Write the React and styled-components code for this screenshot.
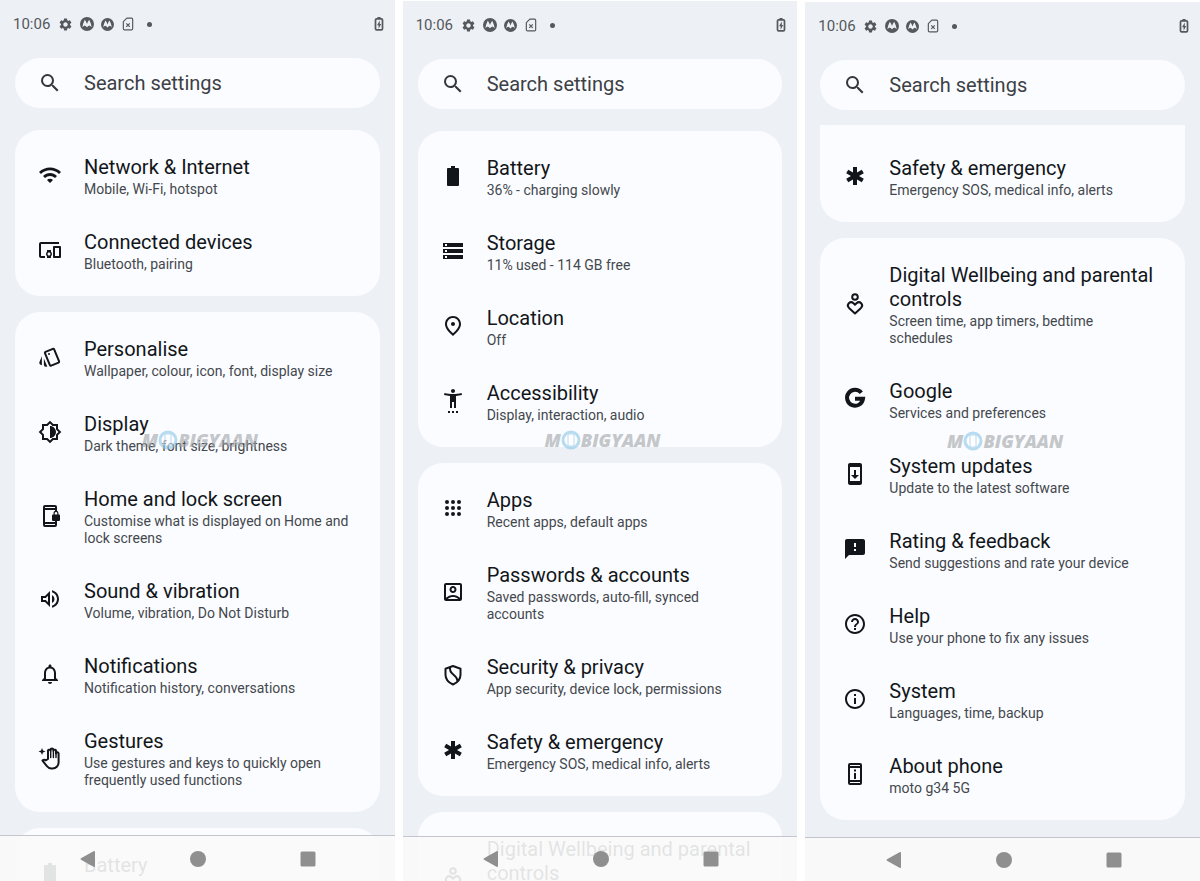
import styled, { createGlobalStyle } from "styled-components";
import {
  MdDevicesOther,
  MdEmergency,
  MdFeedback,
  MdHelpOutline,
  MdInfoOutline,
  MdNotificationsNone,
  MdOutlineAccountBox,
  MdOutlineBrightnessMedium,
  MdOutlinePlace,
  MdOutlineStyle,
  MdOutlineVolumeUp,
  MdSearch,
  MdSettings,
  MdSettingsAccessibility,
  MdStorage,
  MdSystemUpdate,
  MdWifi,
} from "react-icons/md";

const Svg = ({ children, ...props }) => (
  <svg viewBox="0 0 24 24" width="24" height="24" fill="currentColor" {...props}>
    {children}
  </svg>
);

const BatteryIcon = () => (
  <Svg>
    <path d="M10 2h4v2h3a1 1 0 0 1 1 1v16a1 1 0 0 1-1 1H7a1 1 0 0 1-1-1V5a1 1 0 0 1 1-1h3z" />
  </Svg>
);

const HomeLockIcon = () => (
  <Svg>
    <path d="M7 1h10a2 2 0 0 1 2 2v4h-2V6H7v12h10v-1h2v4a2 2 0 0 1-2 2H7a2 2 0 0 1-2-2V3a2 2 0 0 1 2-2zm0 2v1h10V3zm0 17v1h10v-1z" />
    <path d="M21 10.5h-.5V9.3a2.5 2.5 0 0 0-5 0v1.2H15a1 1 0 0 0-1 1V16a1 1 0 0 0 1 1h6a1 1 0 0 0 1-1v-4.5a1 1 0 0 0-1-1zm-1.7 0h-2.6V9.3a1.3 1.3 0 0 1 2.6 0z" />
  </Svg>
);

const GesturesIcon = () => (
  <Svg>
    <path d="M4 2l1 2.5 2.5 1L5 6.5 4 9 3 6.5.5 5.5 3 4.5z" />
    <g fill="none" stroke="currentColor" strokeWidth="2" strokeLinejoin="round" strokeLinecap="round">
      <path d="M10 13V5.5a1.3 1.3 0 0 1 2.6-.8V4a1.4 1.4 0 0 1 2.8 0v.7a1.3 1.3 0 0 1 2.6.8v2a1.3 1.3 0 0 1 2.6.3v8.7a6 6 0 0 1-6 6h-1.2c-2 0-3.3-.8-4.5-2.3l-4.400-5.500c.8-1.100 2-1.200 3.200-.4z" />
      <path d="M12.7 5.2v6.3M15.4 5.2v6.3M18 6.5v5" strokeWidth="1.4" />
    </g>
  </Svg>
);

const AppsIcon = () => (
  <Svg>
    {[6, 12, 18].map((y) =>
      [6, 12, 18].map((x) => <circle key={`${x}-${y}`} cx={x} cy={y} r="2" />)
    )}
  </Svg>
);

const ShieldIcon = () => (
  <Svg fill="none" stroke="currentColor" strokeWidth="2" strokeLinejoin="round">
    <path d="M12 3l7.5 2.7v6c0 4.5-3 7.8-7.5 9.8-4.5-2-7.5-5.3-7.5-9.8v-6z" />
    <path d="M9 4.2c-.5 3.5.5 5.300 3.300 7.300 2.600 1.900 4 3.500 4.200 6.500" />
  </Svg>
);

const WellbeingIcon = () => (
  <Svg fill="none" stroke="currentColor" strokeWidth="2">
    <circle cx="12" cy="5" r="2.8" />
    <path
      strokeLinejoin="round"
      d="M12 21.5l-6-5.600c-3.200-3.400 1.300-7.600 4.500-4.600l1.500 1.500 1.500-1.500c3.200-3 7.700 1.200 4.500 4.600z"
    />
  </Svg>
);

const GoogleIcon = () => (
  <Svg fill="none" stroke="currentColor" strokeWidth="4">
    <path d="M18.300 5.700A8 8 0 1 0 20 11.700H12" />
  </Svg>
);

const AboutIcon = () => (
  <Svg>
    <path d="M13 7.5h-2v2h2zm0 3.500h-2v6h2zM17 1H7a2 2 0 0 0-2 2v18a2 2 0 0 0 2 2h10a2 2 0 0 0 2-2V3a2 2 0 0 0-2-2zm0 20H7v-1h10zm0-3H7V6h10zm0-14H7V3h10z" />
  </Svg>
);

const MotoIcon = ({ size }) => (
  <Svg width={size} height={size}>
    <circle cx="12" cy="12" r="12" />
    <path
      fill="#edf1f6"
      d="M4 17.5C4.6 13 6 8.6 8.2 4.5c1.8 2.2 3 4.6 3.8 7.3.8-2.7 2-5.1 3.8-7.3 2.2 4.1 3.6 8.5 4.2 13-1.1-1.500-2.400-2.500-4-3-1.500.6-2.800 1.600-4 3-1.200-1.400-2.500-2.400-4-3-1.600.5-2.900 1.500-4 3z"
    />
  </Svg>
);

const SimIcon = () => (
  <Svg width="14" height="14" fill="none" stroke="currentColor" strokeWidth="2">
    <path strokeLinejoin="round" d="M10 2h8a2 2 0 0 1 2 2v16a2 2 0 0 1-2 2H6a2 2 0 0 1-2-2V8z" />
    <path d="M9 11l6 6M15 11l-6 6" />
  </Svg>
);

const ChargingIcon = () => (
  <Svg viewBox="0 0 12 18" width="10" height="14" stroke="currentColor">
    <path d="M4 0h4v2H4z" stroke="none" />
    <rect x="1.5" y="2.5" width="9" height="14" rx="1.5" fill="none" strokeWidth="2.2" />
    <path d="M7 4.500L3.500 10.500H5.500V15L8.800 9H7z" stroke="none" />
  </Svg>
);

const digitalWellbeing = {
  icon: WellbeingIcon,
  title: "Digital Wellbeing and parental controls",
  text: "Screen time, app timers, bedtime schedules",
};
const battery = { icon: BatteryIcon, title: "Battery", text: "36% - charging slowly" };
const safety = {
  icon: MdEmergency,
  title: "Safety & emergency",
  text: "Emergency SOS, medical info, alerts",
};

const screens = [
  {
    groups: [
      [
        { icon: MdWifi, title: "Network & Internet", text: "Mobile, Wi-Fi, hotspot" },
        { icon: MdDevicesOther, title: "Connected devices", text: "Bluetooth, pairing" },
      ],
      [
        { icon: MdOutlineStyle, title: "Personalise", text: "Wallpaper, colour, icon, font, display size" },
        { icon: MdOutlineBrightnessMedium, title: "Display", text: "Dark theme, font size, brightness" },
        {
          icon: HomeLockIcon,
          title: "Home and lock screen",
          text: "Customise what is displayed on Home and lock screens",
        },
        { icon: MdOutlineVolumeUp, title: "Sound & vibration", text: "Volume, vibration, Do Not Disturb" },
        { icon: MdNotificationsNone, title: "Notifications", text: "Notification history, conversations" },
        {
          icon: GesturesIcon,
          title: "Gestures",
          text: "Use gestures and keys to quickly open frequently used functions",
        },
      ],
      [{ icon: BatteryIcon, title: "Battery" }],
    ],
  },
  {
    groups: [
      [
        battery,
        { icon: MdStorage, title: "Storage", text: "11% used - 114 GB free" },
        { icon: MdOutlinePlace, title: "Location", text: "Off" },
        { icon: MdSettingsAccessibility, title: "Accessibility", text: "Display, interaction, audio" },
      ],
      [
        { icon: AppsIcon, title: "Apps", text: "Recent apps, default apps" },
        {
          icon: MdOutlineAccountBox,
          title: "Passwords & accounts",
          text: "Saved passwords, auto-fill, synced accounts",
        },
        { icon: ShieldIcon, title: "Security & privacy", text: "App security, device lock, permissions" },
        safety,
      ],
      [digitalWellbeing],
    ],
  },
  {
    scrolled: true,
    groups: [
      [safety],
      [
        digitalWellbeing,
        { icon: GoogleIcon, title: "Google", text: "Services and preferences" },
        { icon: MdSystemUpdate, title: "System updates", text: "Update to the latest software" },
        { icon: MdFeedback, title: "Rating & feedback", text: "Send suggestions and rate your device" },
        { icon: MdHelpOutline, title: "Help", text: "Use your phone to fix any issues" },
        { icon: MdInfoOutline, title: "System", text: "Languages, time, backup" },
        { icon: AboutIcon, title: "About phone", text: "moto g34 5G" },
      ],
    ],
  },
];

const Row = ({ item }) => {
  const Icon = item.icon;
  return (
    <RowButton type="button">
      <Icon />
      <RowText>
        <Title>{item.title}</Title>
        <Summary>{item.text}</Summary>
      </RowText>
    </RowButton>
  );
};

const Screen = ({ groups, scrolled, index }) => (
  <Phone $top={index}>
    <StatusBar>
      <Clock>10:06</Clock>
      <StatusIcons>
        <MdSettings size={15} />
        <MotoIcon size={14} />
        <MotoIcon size={13} />
        <SimIcon />
        <Dot />
      </StatusIcons>
      <ChargingIcon />
    </StatusBar>
    <SearchBar>
      <MdSearch />
      <SearchInput type="search" placeholder="Search settings" aria-label="Search settings" />
    </SearchBar>
    <Groups $scrolled={scrolled}>
      {groups.map((items, i) => (
        <Card key={i} $cut={scrolled && i === 0}>
          {items.map((item) => (
            <Row key={item.title} item={item} />
          ))}
        </Card>
      ))}
    </Groups>
    <Watermark>
      M
      <svg viewBox="0 0 20 20" width="20" height="20" fill="none">
        <circle cx="10" cy="10" r="8" fill="#fff" stroke="#8cc6e6" strokeWidth="3" />
        <rect x="7" y="4" width="6" height="12" rx="1" stroke="#8cc6e6" />
      </svg>
      BIGYAAN
    </Watermark>
    <NavBar $top={index}>
      <NavButton type="button" aria-label="Back">
        <svg viewBox="0 0 20 20" width="20" height="20">
          <path d="M17 3v14a1 1 0 0 1-1.5.8L3 10.8a1 1 0 0 1 0-1.6l12.5-7a1 1 0 0 1 1.5.8z" />
        </svg>
      </NavButton>
      <NavButton type="button" aria-label="Home">
        <svg viewBox="0 0 20 20" width="20" height="20">
          <circle cx="10" cy="10" r="8" />
        </svg>
      </NavButton>
      <NavButton type="button" aria-label="Recents">
        <svg viewBox="0 0 20 20" width="20" height="20">
          <rect x="2.5" y="2.5" width="15" height="15" rx="1.5" />
        </svg>
      </NavButton>
    </NavBar>
  </Phone>
);

const App = () => (
  <>
    <GlobalStyle />
    <Page>
      {screens.map((screen, i) => (
        <Screen key={i} index={i} {...screen} />
      ))}
    </Page>
  </>
);

export default App;

const GlobalStyle = createGlobalStyle`
  * {
    box-sizing: border-box;
  }

  body {
    margin: 0;
    background: #fff;
    font-family: Roboto, "Liberation Sans", sans-serif;
  }
`;

const Page = styled.main`
  display: grid;
  grid-template-columns: repeat(3, minmax(0, 1fr));
  gap: 8px;
  height: 100vh;
  overflow: hidden;
`;

const Phone = styled.section`
  position: relative;
  display: flex;
  flex-direction: column;
  min-height: 0;
  margin-top: ${(p) => p.$top}px;
  overflow: hidden;
  background: #edf1f6;
`;

const StatusBar = styled.header`
  display: flex;
  flex: none;
  align-items: center;
  height: 48px;
  padding: 0 11px 0 13px;
  color: #55585c;
`;

const Clock = styled.time`
  width: 45px;
  font-size: 15px;
`;

const StatusIcons = styled.div`
  display: flex;
  flex: 1;
  align-items: center;
  gap: 7px;
`;

const Dot = styled.span`
  width: 5px;
  height: 5px;
  margin-left: 5px;
  border-radius: 50%;
  background: currentColor;
`;

const SearchBar = styled.label`
  display: flex;
  flex: none;
  align-items: center;
  gap: 22px;
  height: 50px;
  margin: 10px 15px 0;
  padding: 0 23px;
  border-radius: 25px;
  background: #fbfcff;
  color: #33373b;

  svg {
    flex: none;
    width: 24px;
    height: 24px;
  }
`;

const SearchInput = styled.input`
  flex: 1;
  min-width: 0;
  padding: 0;
  border: 0;
  outline: 0;
  background: none;
  color: inherit;
  font: inherit;
  font-size: 20px;

  &::placeholder {
    color: #3d4044;
    opacity: 1;
  }
`;

const Groups = styled.div`
  display: flex;
  flex: 1;
  flex-direction: column;
  gap: 16px;
  min-height: 0;
  margin-top: ${(p) => (p.$scrolled ? 15 : 22)}px;
  padding: 0 15px;
`;

const Card = styled.div`
  flex: none;
  padding: ${(p) => (p.$cut ? 14 : 8)}px 0 8px;
  border-radius: ${(p) => (p.$cut ? "0 0 25px 25px" : "25px")};
  background: #fbfcff;
`;

const RowButton = styled.button`
  display: flex;
  align-items: center;
  gap: 22px;
  width: 100%;
  padding: 17px 26px 15px 23px;
  border: 0;
  background: none;
  color: #12161a;
  font: inherit;
  text-align: left;

  svg {
    flex: none;
    width: 24px;
    height: 24px;
    margin-bottom: 3px;
  }
`;

const RowText = styled.span`
  display: flex;
  flex-direction: column;
  gap: 2px;
  min-width: 0;
`;

const Title = styled.span`
  font-size: 20px;
  line-height: 24px;
`;

const Summary = styled.span`
  min-height: 17px;
  color: #44484d;
  font-size: 14px;
  line-height: 17px;
`;

const Watermark = styled.div`
  position: absolute;
  top: 50%;
  left: 0;
  right: 0;
  display: flex;
  align-items: center;
  justify-content: center;
  height: 20px;
  margin-top: -11px;
  padding-left: 5px;
  color: #a0a4a8;
  font-family: "Open Sans", sans-serif;
  font-size: 18px;
  font-style: italic;
  font-weight: 800;
  opacity: 0.6;
  pointer-events: none;
`;

const NavBar = styled.nav`
  position: absolute;
  bottom: 0;
  left: 0;
  right: 0;
  display: flex;
  align-items: center;
  justify-content: center;
  gap: 90px;
  height: ${(p) => 46 - p.$top}px;
  padding-left: 2px;
  border-top: 1px solid #c3c6cd;
  background: rgba(250, 250, 250, 0.9);
  background-clip: padding-box;
`;

const NavButton = styled.button`
  width: 20px;
  height: 20px;
  padding: 0;
  border: 0;
  background: none;

  svg {
    display: block;
    fill: #8f8f8f;
  }
`;
